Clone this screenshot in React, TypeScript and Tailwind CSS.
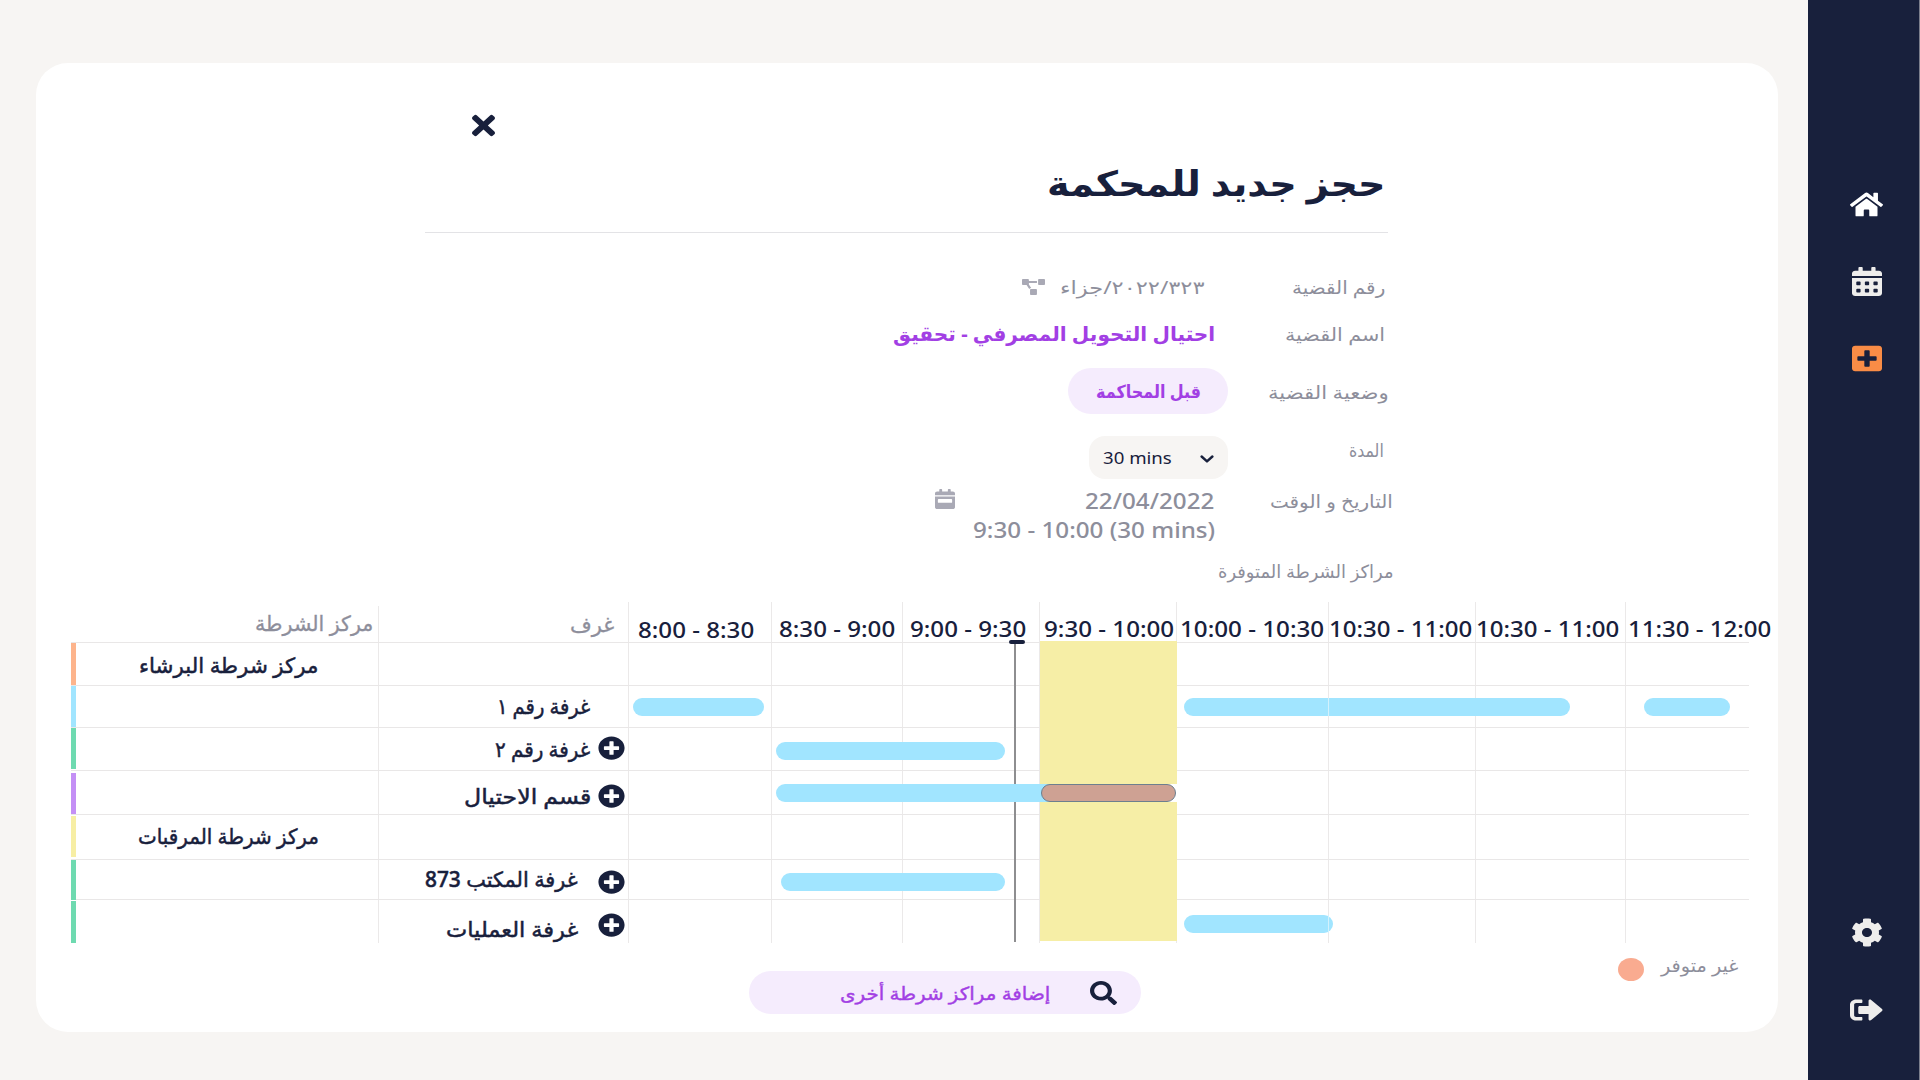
import { useLayoutEffect, useRef, useState } from "react";
import type { ReactNode } from "react";
import {
  FaCalendarAlt,
  FaCalendarWeek,
  FaCog,
  FaHome,
  FaPlusCircle,
  FaPlusSquare,
  FaProjectDiagram,
  FaSearch,
  FaSignOutAlt,
  FaTimes,
} from "react-icons/fa";

/** One line of text stretched horizontally to fill the width of its box. */
function Fit({ className, children, rtl = true }: { className: string; children: ReactNode; rtl?: boolean }) {
  const box = useRef<HTMLDivElement>(null);
  const text = useRef<HTMLSpanElement>(null);
  const [scale, setScale] = useState(1);
  useLayoutEffect(() => {
    if (box.current && text.current) setScale(box.current.clientWidth / text.current.offsetWidth);
  }, []);
  return (
    <div ref={box} dir="ltr" className={`shrink-0 leading-none ${className}`}>
      <span
        ref={text}
        dir={rtl ? "rtl" : "ltr"}
        className="inline-block origin-left whitespace-nowrap"
        style={{ transform: `scaleX(${scale})` }}
      >
        {children}
      </span>
    </div>
  );
}

const slots = [
  { label: "8:00 - 8:30", cell: "w-[143px] pl-[9px] pt-[18px]", text: "w-[116px]" },
  { label: "8:30 - 9:00", cell: "w-[131px] pl-[7px] pt-[17px]", text: "w-[116px]" },
  { label: "9:00 - 9:30", cell: "w-[137px] pl-[7px] pt-[17px]", text: "w-[116px]" },
  { label: "9:30 - 10:00", cell: "w-[137px] pl-[4px] pt-[17px]", text: "w-[130px]" },
  { label: "10:00 - 10:30", cell: "w-[152px] pl-[3px] pt-[17px]", text: "w-[144px]" },
  { label: "10:30 - 11:00", cell: "w-[147px] pl-0 pt-[17px]", text: "w-[143px]" },
  { label: "10:30 - 11:00", cell: "w-[150px] pl-0 pt-[17px]", text: "w-[143px]" },
  { label: "11:30 - 12:00", cell: "w-[124px] pl-[2px] pt-[17px]", text: "w-[143px]" },
];

const slotCells = ["w-[143px]", "w-[131px]", "w-[137px]", "w-[137px]", "w-[152px]", "w-[147px]", "w-[150px]", "w-[124px]"];

const rows = [
  { h: "h-[43px]", strip: "h-[42px] bg-[#fdb48c]", station: "مركز شرطة البرشاء", stationBox: "ml-[63px] w-[180px] pt-[12px]" },
  { h: "h-[42px]", strip: "h-[41px] bg-[#a1e5ff]", room: "غرفة رقم ١", roomBox: "mr-[35px] w-[93px] pt-[10px]" },
  { h: "h-[43px]", strip: "h-[41px] bg-[#6edab0]", room: "غرفة رقم ٢", roomBox: "mr-[8px] w-[95px] pt-[11px]", plus: "mt-[8px]" },
  { h: "h-[44px]", strip: "mt-[2px] h-[41px] bg-[#c48ff5]", room: "قسم الاحتيال", roomBox: "mr-[7px] w-[127px] pt-[15px]", plus: "mt-[13px]" },
  { h: "h-[45px]", strip: "mt-[1px] h-[41px] bg-[#f7eea4]", station: "مركز شرطة المرقبات", stationBox: "ml-[62px] w-[181px] pt-[11px]" },
  { h: "h-[40px]", strip: "h-[40px] bg-[#6edab0]", room: "غرفة المكتب 873", roomBox: "mr-[20px] w-[153px] pt-[9px]", plus: "mt-[10px]" },
  { h: "h-[44px]", strip: "mt-[1px] h-[42px] bg-[#6edab0]", room: "غرفة العمليات", roomBox: "mr-[20px] w-[132px] pt-[19px]", plus: "mt-[13px]" },
];

/** Bookings, placed on the time canvas of the schedule. */
const bars = [
  "left-[562px] top-[96px] w-[131px]",
  "left-[1113px] top-[96px] w-[386px]",
  "left-[1573px] top-[96px] w-[86px]",
  "left-[705px] top-[140px] w-[229px]",
  "left-[710px] top-[271px] w-[224px]",
  "left-[1113px] top-[313px] w-[149px]",
];

function Schedule() {
  return (
    <section className="relative ml-[35px] h-[343px] w-[1678px] text-[21px] font-medium text-[#18203c]">
      <div className="flex h-10 items-stretch">
        <div className="flex w-[307px] justify-end pr-[5px] pt-[11px] font-normal text-[#8d8e9b] [-webkit-text-stroke:0.3px]">
          <Fit className="w-[118px]">مركز الشرطة</Fit>
        </div>
        <div className="mt-1 flex w-[250px] justify-end border-l border-[#ebe9e9] pr-[14px] pt-[8px] font-normal text-[#8d8e9b] [-webkit-text-stroke:0.3px]">
          <Fit className="w-[44px]">غرف</Fit>
        </div>
        {slots.map((s, i) => (
          <div key={i} className={`shrink-0 border-l border-[#ebe9e9] ${s.cell}`}>
            <Fit rtl={false} className={s.text}>
              {s.label}
            </Fit>
          </div>
        ))}
      </div>
      {rows.map((r, i) => (
        <div key={i} className={`flex border-t border-[#e9e7e7] ${r.h}`}>
          <div className="flex w-[307px] shrink-0 [-webkit-text-stroke:0.5px]">
            <div className={`w-[5px] ${r.strip}`} />
            {r.station && <Fit className={r.stationBox!}>{r.station}</Fit>}
          </div>
          <div className="flex w-[250px] shrink-0 justify-end border-l border-[#ebe9e9] pr-[3px]">
            {r.room && <Fit className={`[-webkit-text-stroke:0.5px] ${r.roomBox}`}>{r.room}</Fit>}
            {r.plus && <FaPlusCircle preserveAspectRatio="none" className={`h-[24px] w-[27px] ${r.plus}`} />}
          </div>
          {slotCells.map((c, j) => (
            <div key={j} className={`shrink-0 border-l border-[#ebe9e9] ${c}`} />
          ))}
        </div>
      ))}

      <div className="absolute left-[969px] top-[39px] h-[300px] w-[137px] bg-[#f6eea6]" />
      <div className="absolute left-[943px] top-[41px] h-[299px] w-[2px] bg-[#8e8e90]" />
      <div className="absolute left-[938px] top-[38px] h-[4px] w-[16px] rounded-sm bg-[#18203c]" />
      {bars.map((b) => (
        <div key={b} className={`absolute h-[18px] rounded-full bg-[#a1e5ff] ${b}`} />
      ))}
      <div className="absolute left-[705px] top-[182px] flex h-[18px] w-[401px] rounded-l-full bg-white">
        <div className="w-[276px] rounded-l-full bg-[#a1e5ff]" />
        <div className="-ml-[11px] w-[135px] rounded-full border border-[#6d7f8e] bg-[#cea193]" />
      </div>
      <div className="absolute left-[1257px] top-[96px] h-[18px] w-px bg-[#d3f1fc]" />
      <div className="absolute left-[1257px] top-[313px] h-[18px] w-px bg-[#d3f1fc]" />
    </section>
  );
}

function Details() {
  return (
    <section className="flex w-[1357px] flex-col text-[18px] text-[#8d8e9b]">
      <div className="h-[95px] pl-[436px] pt-[47px] text-[#18203c]">
        <FaTimes preserveAspectRatio="none" className="h-[31px] w-[23px]" />
      </div>
      <div className="ml-[389px] mr-[5px] flex h-[75px] w-[963px] justify-end border-b border-[#e3e3e6] pr-[3px] text-[#18203c]">
        <Fit className="w-[338px] pt-[7px] text-[35px] font-bold">حجز جديد للمحكمة</Fit>
      </div>
      <div className="mt-[31px] flex h-[46px] items-center justify-end pr-[8px]">
        <FaProjectDiagram preserveAspectRatio="none" className="mr-[15px] h-[16px] w-[23px] text-[#a9a9b5]" />
        <Fit className="mr-[87px] w-[145px]">{"٣٢٣\u200f/\u200f٢٠٢٢\u200f/جزاء"}</Fit>
        <Fit className="w-[93px]">رقم القضية</Fit>
      </div>
      <div className="flex h-[48px] items-center justify-end pr-[8px]">
        <Fit className="mr-[70px] w-[322px] text-[20px] font-bold text-[#a23fe4]">احتيال التحويل المصرفي - تحقيق</Fit>
        <Fit className="w-[100px]">اسم القضية</Fit>
      </div>
      <div className="mt-1 flex h-[58px] items-center justify-end pr-[4px]">
        <div className="mr-[40px] flex h-[46px] w-[160px] items-center justify-center rounded-full bg-[#f5ecfd] text-[#a23fe4]">
          <Fit className="w-[105px] font-bold">قبل المحاكمة</Fit>
        </div>
        <Fit className="w-[121px] pt-[2px]">وضعية القضية</Fit>
      </div>
      <div className="flex h-[66px] items-start justify-end pr-[9px] pt-[16px]">
        <div className="mr-[121px] flex h-[43px] w-[139px] items-center justify-between rounded-2xl bg-[#f7f5f3] px-[14px] text-[#18203c]">
          <Fit rtl={false} className="w-[69px] text-[17px]">
            30 mins
          </Fit>
          <svg viewBox="0 0 14 8" className="mt-[2px] h-[8px] w-[14px]" fill="none" stroke="currentColor" strokeWidth="2.4" strokeLinecap="round" strokeLinejoin="round">
            <path d="M1.6 1.5 7 6.4l5.4-4.9" />
          </svg>
        </div>
        <Fit className="w-[35px] pt-[5px]">المدة</Fit>
      </div>
      <div className="flex h-[30px] items-center justify-end">
        <FaCalendarWeek preserveAspectRatio="none" className="mb-[4px] mr-[130px] h-[20px] w-[20px] text-[#a9a9b5]" />
        <Fit rtl={false} className="mr-[56px] w-[129px] text-[21px] font-medium">
          22/04/2022
        </Fit>
        <Fit className="w-[123px]">التاريخ و الوقت</Fit>
      </div>
      <div className="flex h-[29px] items-center justify-end pr-[178px]">
        <Fit rtl={false} className="w-[242px] text-[21px] font-medium">
          9:30 - 10:00 (30 mins)
        </Fit>
      </div>
      <div className="flex h-[57px] items-center justify-end pb-[6px]">
        <Fit className="w-[175px]">مراكز الشرطة المتوفرة</Fit>
      </div>
    </section>
  );
}

function Footer() {
  return (
    <footer className="flex items-start">
      <div className="ml-[713px] mt-[26px] flex h-[43px] w-[392px] items-center rounded-full bg-[#f5ecfd] pl-[91px]">
        <Fit className="mr-[40px] w-[210px] text-[18px] font-medium text-[#a23fe4] [-webkit-text-stroke:0.4px]">إضافة مراكز شرطة أخرى</Fit>
        <FaSearch preserveAspectRatio="none" className="h-[24px] w-[27px] text-[#18203c]" />
      </div>
      <div className="ml-[477px] mt-[13px] h-[23px] w-[26px] rounded-[50%] bg-[#f9ab90]" />
      <Fit className="ml-[17px] mt-[11px] w-[77px] text-[18px] text-[#8d8e9b]">غير متوفر</Fit>
    </footer>
  );
}

function Sidebar() {
  return (
    <aside className="flex h-full w-[112px] flex-col items-center border-r border-[#7b7e8c] bg-[#18203c] pl-[6px] pt-[191px] text-[#eeedec]">
      <FaHome preserveAspectRatio="none" className="h-[27px] w-[33px] text-white" />
      <FaCalendarAlt preserveAspectRatio="none" className="mt-[49px] h-[29px] w-[30px]" />
      <FaPlusSquare preserveAspectRatio="none" className="mt-[48px] h-[29px] w-[30px] text-[#f98c46]" />
      <FaCog preserveAspectRatio="none" className="mt-[545px] h-[29px] w-[32px]" />
      <FaSignOutAlt preserveAspectRatio="none" className="mt-[49px] h-[28px] w-[33px]" />
    </aside>
  );
}

export default function App() {
  return (
    <div className="flex h-[1080px] w-[1920px] overflow-hidden bg-[#f7f5f3] font-['Noto_Sans','DejaVu_Sans',sans-serif]">
      <main className="w-[1808px] pl-[36px] pt-[63px]">
        <div className="h-[969px] w-[1742px] rounded-[32px] bg-white">
          <Details />
          <Schedule />
          <Footer />
        </div>
      </main>
      <Sidebar />
    </div>
  );
}
